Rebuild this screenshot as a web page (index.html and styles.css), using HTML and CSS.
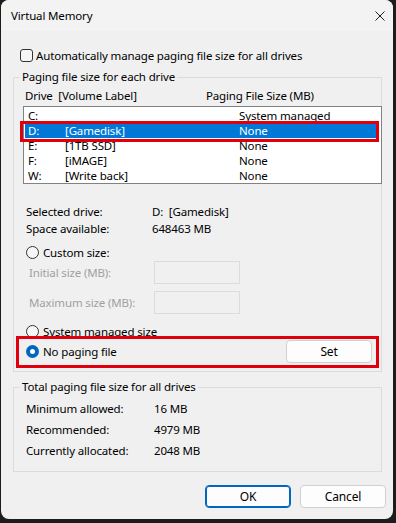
FILE: index.html
```html
<!DOCTYPE html>
<html lang="en">

<head>
    <meta charset="UTF-8">
    <meta name="viewport" content="width=device-width, initial-scale=1.0">
    <title>Virtual Memory</title>
    <link rel="stylesheet" href="styles.css">
</head>

<body>
    <div class="window">
        <div class="titlebar">
            <span class="title">Virtual Memory</span>
            <svg class="close" width="10" height="10" viewBox="0 0 10 10">
                <path d="M0.5 0.5 L9.5 9.5 M9.5 0.5 L0.5 9.5" stroke="#1b1b1b" stroke-width="1" fill="none"/>
            </svg>
        </div>

        <div class="content">
            <label class="auto-row">
                <span class="checkbox"></span>
                <span>Automatically manage paging file size for all drives</span>
            </label>

            <fieldset class="group group-drives">
                <legend>Paging file size for each drive</legend>

                <div class="list-head">
                    <span>Drive&nbsp; [Volume Label]</span>
                    <span>Paging File Size (MB)</span>
                </div>

                <div class="drive-list">
                    <div class="drive-row"><span>C:</span><span></span><span>System managed</span></div>
                    <div class="drive-row selected"><span>D:</span><span>[Gamedisk]</span><span>None</span></div>
                    <div class="drive-row"><span>E:</span><span>[1TB SSD]</span><span>None</span></div>
                    <div class="drive-row"><span>F:</span><span>[iMAGE]</span><span>None</span></div>
                    <div class="drive-row"><span>W:</span><span>[Write back]</span><span>None</span></div>
                </div>

                <div class="info">
                    <div class="info-row"><span>Selected drive:</span><span>D:&nbsp; [Gamedisk]</span></div>
                    <div class="info-row"><span>Space available:</span><span>648463 MB</span></div>
                </div>

                <div class="radio-row custom">
                    <span class="radio"></span>
                    <span>Custom size:</span>
                </div>
                <div class="size-row first">
                    <span>Initial size (MB):</span>
                    <span class="size-box"></span>
                </div>
                <div class="size-row">
                    <span>Maximum size (MB):</span>
                    <span class="size-box"></span>
                </div>

                <div class="radio-row system">
                    <span class="radio"></span>
                    <span>System managed size</span>
                </div>
                <div class="radio-row nopaging">
                    <span class="radio checked"></span>
                    <span class="grow">No paging file</span>
                    <button class="btn set">Set</button>
                </div>
            </fieldset>

            <fieldset class="group group-total">
                <legend>Total paging file size for all drives</legend>
                <div class="total-row"><span>Minimum allowed:</span><span>16 MB</span></div>
                <div class="total-row"><span>Recommended:</span><span>4979 MB</span></div>
                <div class="total-row"><span>Currently allocated:</span><span>2048 MB</span></div>
            </fieldset>

            <div class="actions">
                <button class="btn primary">OK</button>
                <button class="btn">Cancel</button>
            </div>
        </div>
    </div>
</body>

</html>
```

FILE: styles.css
```css
body {
    margin: 0;
    padding: 0;
    background-color: #1c1c1c;
    font-family: "Noto Sans", "Open Sans", sans-serif;
    font-size: 11.5px;
    letter-spacing: -0.15px;
    color: #000000;
}

.window {
    width: 392px;
    height: 519px;
    margin-left: 1px;
    background-color: #f0f0f0;
    border-radius: 8px;
    overflow: hidden;
    display: flex;
    flex-direction: column;
}

.titlebar {
    height: 31px;
    flex-shrink: 0;
    background-color: #f3f3f3;
    display: flex;
    align-items: center;
    justify-content: space-between;
    padding: 0 8px 0 10px;
}

.title {
    line-height: 16px;
}

.content {
    padding-left: 12px;
    display: flex;
    flex-direction: column;
}

.auto-row {
    margin-top: 18px;
    height: 13px;
    display: flex;
    align-items: center;
    gap: 3px;
    padding-left: 7px;
    line-height: 13px;
}

.checkbox {
    width: 11px;
    height: 11px;
    border: 1px solid #333333;
    border-radius: 3px;
    background-color: #f6f6f6;
}

.group {
    margin: 7px 0 0;
    padding: 0;
    min-width: 0;
    width: 369px;
    box-sizing: border-box;
    border: 1px solid #dcdcdc;
}

.group legend {
    margin-left: 6px;
    padding: 0 2px;
    line-height: 16px;
}

.list-head {
    margin-top: 3px;
    padding-left: 11px;
    line-height: 15px;
    display: flex;
}

.list-head span:first-child {
    width: 181px;
}

.drive-list {
    margin: 3px 0 0 9px;
    width: 359px;
    box-sizing: border-box;
    background-color: #ffffff;
    border: 1px solid #828282;
    padding: 1px 0 0;
}

.drive-row {
    position: relative;
    height: 15px;
    line-height: 15px;
    margin: 0 2px 0 1px;
    padding-left: 3px;
    display: grid;
    grid-template-columns: 37px 174px 1fr;
}

.drive-row.selected {
    background-color: #0078d7;
    color: #ffffff;
}

.drive-row.selected::after {
    content: "";
    position: absolute;
    left: -5px;
    right: 0;
    top: -2px;
    bottom: -4px;
    border: 3px solid #e0000d;
}

.info {
    margin-top: 19px;
    padding-left: 12px;
}

.info-row {
    line-height: 17px;
    display: grid;
    grid-template-columns: 126px 1fr;
}

.radio-row {
    display: flex;
    align-items: center;
    gap: 4px;
    padding-left: 12px;
    height: 17px;
}

.radio-row.custom {
    margin-top: 7px;
}

.radio-row.system {
    margin-top: 9px;
}

.radio {
    width: 11px;
    height: 11px;
    border: 1px solid #333333;
    border-radius: 50%;
    background-color: #f6f6f6;
    flex-shrink: 0;
}

.radio.checked {
    width: 5px;
    height: 5px;
    border: 4px solid #0067c0;
    background-color: #ffffff;
}

.size-row {
    display: flex;
    align-items: center;
    padding-left: 15px;
    color: #a0a0a0;
    margin-top: 7px;
}

.size-row.first {
    margin-top: 0;
}

.size-row span:first-child {
    width: 125px;
}

.size-box {
    width: 86px;
    height: 23px;
    box-sizing: border-box;
    border: 1px solid #dcdcdc;
}

.radio-row.nopaging {
    position: relative;
    height: 23px;
    margin-right: 9px;
    margin-bottom: 8px;
}

.radio-row.nopaging::after {
    content: "";
    position: absolute;
    left: 2px;
    right: -7px;
    top: -4px;
    bottom: -5px;
    border: 3px solid #e0000d;
}

.grow {
    flex: 1;
}

.btn {
    width: 86px;
    height: 23px;
    box-sizing: border-box;
    background-color: #fdfdfd;
    border: 1px solid #d0d0d0;
    border-radius: 4px;
    font-family: inherit;
    font-size: 12px;
    letter-spacing: -0.15px;
    color: #000000;
    padding: 0;
}

.btn.primary {
    border-color: #0067c0;
    box-shadow: inset 0 0 0 1px #0067c0;
}

.group-total {
    margin-top: 7px;
    padding-bottom: 10px;
}

.total-row {
    line-height: 21px;
    padding-left: 12px;
    display: grid;
    grid-template-columns: 128px 1fr;
}

.total-row:first-of-type {
    margin-top: 3px;
}

.actions {
    margin-top: 13px;
    display: flex;
    justify-content: flex-end;
    gap: 9px;
    padding-right: 7px;
}
```
